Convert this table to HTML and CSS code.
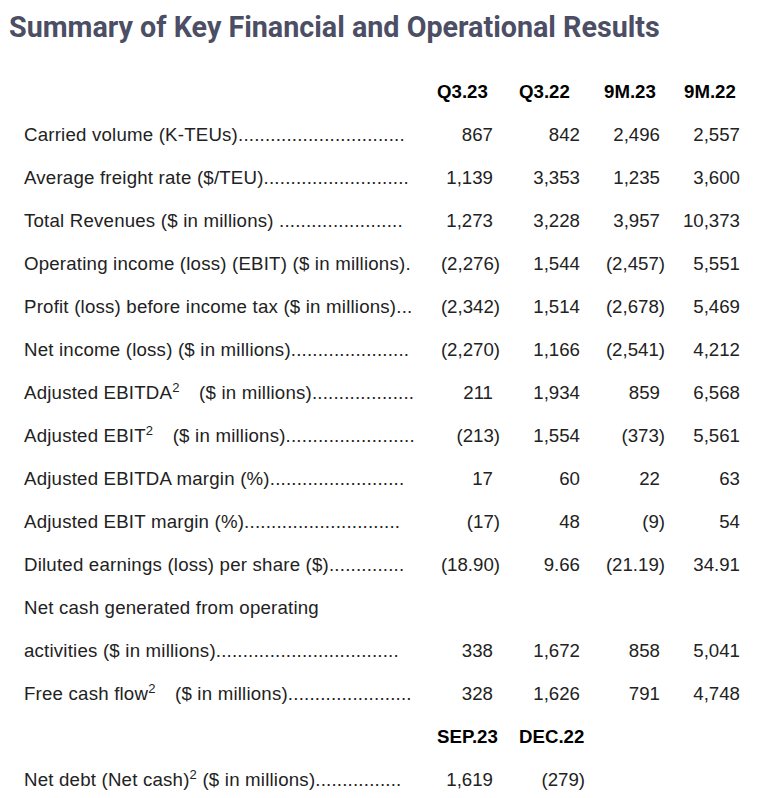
FILE: index.html
```html
<!DOCTYPE html>
<html>
<head>
<meta charset="utf-8">
<link rel="stylesheet" href="styles.css">
</head>
<body>
<h1 class="title">Summary of Key Financial and Operational Results</h1>
<table class="fin">
  <colgroup>
    <col class="w-label"><col class="w-c1"><col class="w-c2"><col class="w-c3"><col class="w-c4">
  </colgroup>
  <tr class="head">
    <td></td><th class="c1">Q3.23</th><th>Q3.22</th><th>9M.23</th><th>9M.22</th>
  </tr>
  <tr>
    <td class="label">Carried volume (K-TEUs)...............................</td>
    <td class="c1 p">867</td><td class="p">842</td><td class="p">2,496</td><td class="p">2,557</td>
  </tr>
  <tr>
    <td class="label">Average freight rate ($/TEU)...........................</td>
    <td class="c1 p">1,139</td><td class="p">3,353</td><td class="p">1,235</td><td class="p">3,600</td>
  </tr>
  <tr>
    <td class="label">Total Revenues ($ in millions) .......................</td>
    <td class="c1 p">1,273</td><td class="p">3,228</td><td class="p">3,957</td><td class="p">10,373</td>
  </tr>
  <tr>
    <td class="label">Operating income (loss) (EBIT) ($ in millions).</td>
    <td>(2,276)</td><td class="p">1,544</td><td>(2,457)</td><td class="p">5,551</td>
  </tr>
  <tr>
    <td class="label">Profit (loss) before income tax ($ in millions)...</td>
    <td>(2,342)</td><td class="p">1,514</td><td>(2,678)</td><td class="p">5,469</td>
  </tr>
  <tr>
    <td class="label">Net income (loss) ($ in millions)......................</td>
    <td>(2,270)</td><td class="p">1,166</td><td>(2,541)</td><td class="p">4,212</td>
  </tr>
  <tr>
    <td class="label">Adjusted EBITDA<sup class="wide">2</sup> ($ in millions)...................</td>
    <td class="c1 p">211</td><td class="p">1,934</td><td class="p">859</td><td class="p">6,568</td>
  </tr>
  <tr>
    <td class="label">Adjusted EBIT<sup class="wide">2</sup> ($ in millions)........................</td>
    <td>(213)</td><td class="p">1,554</td><td>(373)</td><td class="p">5,561</td>
  </tr>
  <tr>
    <td class="label">Adjusted EBITDA margin (%).........................</td>
    <td class="c1 p">17</td><td class="p">60</td><td class="p">22</td><td class="p">63</td>
  </tr>
  <tr>
    <td class="label">Adjusted EBIT margin (%).............................</td>
    <td>(17)</td><td class="p">48</td><td>(9)</td><td class="p">54</td>
  </tr>
  <tr>
    <td class="label">Diluted earnings (loss) per share ($)..............</td>
    <td>(18.90)</td><td class="p">9.66</td><td>(21.19)</td><td class="p">34.91</td>
  </tr>
  <tr>
    <td class="label">Net cash generated from operating</td>
    <td></td><td></td><td></td><td></td>
  </tr>
  <tr>
    <td class="label">activities ($ in millions)..................................</td>
    <td class="c1 p">338</td><td class="p">1,672</td><td class="p">858</td><td class="p">5,041</td>
  </tr>
  <tr>
    <td class="label">Free cash flow<sup class="wide">2</sup> ($ in millions).......................</td>
    <td class="c1 p">328</td><td class="p">1,626</td><td class="p">791</td><td class="p">4,748</td>
  </tr>
  <tr class="head">
    <td></td><th class="c1">SEP.23</th><th>DEC.22</th><td></td><td></td>
  </tr>
  <tr>
    <td class="label">Net debt (Net cash)<sup>2</sup> ($ in millions)................</td>
    <td class="c1 p">1,619</td><td>(279)</td><td></td><td></td>
  </tr>
</table>
</body>
</html>
```

FILE: styles.css
```css
html, body {
  margin: 0;
  padding: 0;
  background: #ffffff;
}

.title {
  margin: 0;
  padding: 10px 0 0 9px;
  font-family: Roboto, "Liberation Sans", sans-serif;
  font-weight: 700;
  font-size: 28.7px;
  line-height: 34px;
  color: #4b4e64;
}

.fin {
  margin: 26px 0 0 24px;
  border-collapse: collapse;
  table-layout: fixed;
  width: 721px;
  font-family: "Liberation Sans", Arial, sans-serif;
  font-size: 14pt;
  color: #222222;
}

.w-label { width: 407px; }
.w-c1 { width: 69px; }
.w-c2 { width: 85px; }
.w-c3 { width: 80px; }
.w-c4 { width: 80px; }

.fin tr {
  height: 43px;
}

.fin td, .fin th {
  padding: 0;
  height: 43px;
  line-height: 43px;
  white-space: nowrap;
  text-align: right;
  vertical-align: middle;
}

.fin td.label {
  text-align: left;
  overflow: visible;
  letter-spacing: 0.2px;
}

.fin th {
  text-align: left;
  font-weight: 700;
  color: #000000;
  padding-left: 19px;
}

.fin th.c1 {
  padding-left: 6px;
}

.fin td.p {
  padding-right: 5px;
}

.fin td.c1.p {
  padding-right: 7px;
}

sup {
  font-size: 0.7em;
  line-height: 0;
  vertical-align: 0.5em;
}

sup.wide {
  margin-right: 14px;
}
```
